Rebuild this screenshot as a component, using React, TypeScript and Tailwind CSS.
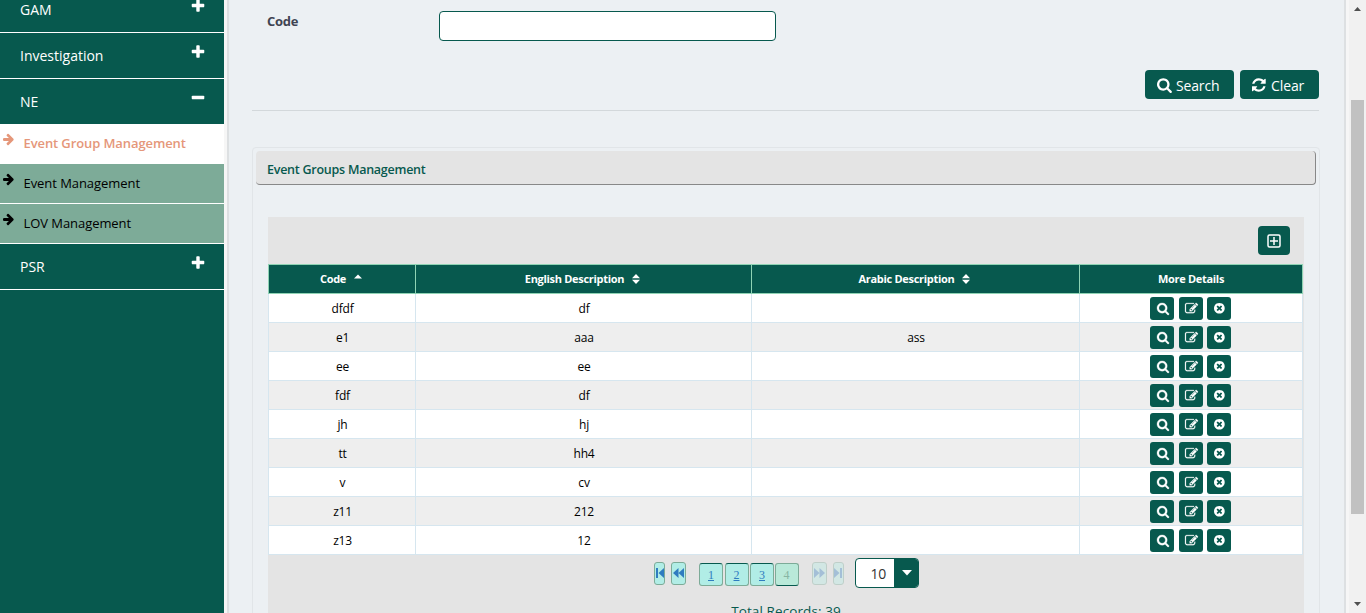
import React from "react";
import clsx from "clsx";

const PATHS = {
  plus: "M1408 736v192q0 40-28 68t-68 28H896v416q0 40-28 68t-68 28H608q-40 0-68-28t-28-68v-416H96q-40 0-68-28T0 928V736q0-40 28-68t68-28h416V224q0-40 28-68t68-28h192q40 0 68 28t28 68v416h416q40 0 68 28t28 68z",
  minus: "M1408 736v192q0 40-28 68t-68 28H96q-40 0-68-28T0 928V736q0-40 28-68t68-28h1216q40 0 68 28t28 68z",
  arrow: "M1472 896q0 54-37 91l-651 651q-39 37-91 37-51 0-90-37l-75-75q-38-38-38-91t38-91l293-293H117q-52 0-84.5-37.5T0 960V832q0-53 32.5-90.5T117 704h704L528 410q-38-36-38-90t38-90l75-75q38-38 90-38 53 0 91 38l651 651q37 35 37 90z",
  search: "M1152 832q0-185-131.5-316.5T704 384 387.500 515.500 256 832t131.500 316.500T704 1280t316.500-131.500T1152 832zm512 832q0 52-38 90t-90 38q-54 0-90-38l-343-342q-179 124-399 124-143 0-273.500-55.500t-225-150-150-225T0 832t55.500-273.500 150-225 225-150T704 128t273.500 55.500 225 150 150 225T1408 832q0 220-124 399l343 343q37 37 37 90z",
  refresh: "M1511 1056q0 5-1 7-64 268-268 434.500T764 1664q-146 0-282.500-55T238 1452l-129 129q-19 19-45 19t-45-19-19-45v-448q0-26 19-45t45-19h448q26 0 45 19t19 45-19 45l-137 137q71 66 161 102t187 36q134 0 250-65t186-179q11-17 53-117 8-23 30-23h192q13 0 22.500 9.500t9.500 22.500zm25-800v448q0 26-19 45t-45 19h-448q-26 0-45-19t-19-45 19-45l138-138Q969 384 768 384q-134 0-250 65T332 628q-11 17-53 117-8 23-30 23H50q-13 0-22.500-9.500T18 736v-7q65-268 270-434.500T768 128q146 0 284 55.500T1297 340l130-129q19-19 45-19t45 19 19 45z",
  edit: "M888 1184l116-116-152-152-116 116v56h96v96h56zm440-720q-16-16-33 1L945 815q-17 17-1 33t33-1l350-350q17-17 1-33zm80 594v190q0 119-84.500 203.500T1120 1536H288q-119 0-203.500-84.500T0 1248V416q0-119 84.500-203.500T288 128h832q63 0 117 25 15 7 18 23 3 17-9 29l-49 49q-14 14-32 8-23-6-45-6H288q-66 0-113 47t-47 113v832q0 66 47 113t113 47h832q66 0 113-47t47-113v-126q0-13 9-22l64-64q15-15 35-7t20 29zm-96-738l288 288-672 672H640V992zm444 132l-92 92-288-288 92-92q28-28 68-28t68 28l152 152q28 28 28 68t-28 68z",
  close: "M1149 1122q0-26-19-45L949 896l181-181q19-19 19-45 0-27-19-46l-90-90q-19-19-46-19-26 0-45 19L768 715 587 534q-19-19-45-19-27 0-46 19l-90 90q-19 19-19 46 0 26 19 45l181 181-181 181q-19 19-19 45 0 27 19 46l90 90q19 19 46 19 26 0 45-19l181-181 181 181q19 19 45 19 27 0 46-19l90-90q19-19 19-46zm387-226q0 209-103 385.500T1153.500 1561 768 1664t-385.500-103T103 1281.500 0 896t103-385.500T382.500 231 768 128t385.500 103T1433 510.500 1536 896z",
};

function Icon({ name, className, box = "0 0 1792 1792" }: { name: keyof typeof PATHS; className?: string; box?: string }) {
  return (
    <svg viewBox={box} fill="currentColor" className={clsx("shrink-0 overflow-visible", className)}>
      <path d={PATHS[name]} />
    </svg>
  );
}

function MenuItem({ label, open = false }: { label: string; open?: boolean }) {
  return (
    <div className="flex h-[46px] shrink-0 items-start border-b border-white bg-[#07594e] pl-5 pr-[19px] text-sm text-white">
      <span className="flex-1 pt-[13px] leading-5">{label}</span>
      <Icon name={open ? "minus" : "plus"} className="mt-[11px] h-4 w-[14px]" box="-64 0 1536 1792" />
    </div>
  );
}

function SubItem({ label, active = false }: { label: string; active?: boolean }) {
  return (
    <div
      className={clsx(
        "flex h-10 shrink-0 items-start border-b border-white pl-[3px] text-[13px]",
        active ? "bg-white font-semibold tracking-[-0.1px] text-[#e5977a]" : "bg-[#7dab98] tracking-[-0.06px] text-black"
      )}
    >
      <Icon name="arrow" className="mt-[9px] h-[13px] w-[13px]" />
      <span className="pl-[7.500px] pt-[9px] leading-5">{label}</span>
    </div>
  );
}

function SortIcon({ both = false }: { both?: boolean }) {
  return (
    <svg viewBox="0 0 8 10" className="ml-2 h-[10px] w-2" fill="white">
      <path d={both ? "M4 0 8 4.200H0zM0 5.800h8L4 10z" : "M4 0.500 8 4.500H0z"} />
    </svg>
  );
}

const COLS = "grid grid-cols-[147px_336px_328px_223px]";

const ROWS = [
  ["dfdf", "df", ""],
  ["e1", "aaa", "ass"],
  ["ee", "ee", ""],
  ["fdf", "df", ""],
  ["jh", "hj", ""],
  ["tt", "hh4", ""],
  ["v", "cv", ""],
  ["z11", "212", ""],
  ["z13", "12", ""],
];

function ActionButton({ name }: { name: keyof typeof PATHS }) {
  return (
    <button className="flex h-[23px] w-6 items-start justify-start rounded-[3px] bg-[#07594e] pl-[7px] pt-[5px] text-white">
      <Icon
        name={name}
        className={clsx(
          name === "edit" && "-ml-px h-[13px] w-[13px] stroke-white stroke-[30]",
          name === "search" && "h-[13px] w-[13px] stroke-white stroke-[40]",
          name === "close" && "ml-[0.5px] h-[12.5px] w-[12.5px]"
        )}
      />
    </button>
  );
}

function NavButton({ kind, wide, disabled = false }: { kind: string; wide: boolean; disabled?: boolean }) {
  return (
    <button
      className={clsx(
        "flex h-[23px] items-center justify-center rounded-[3px] border border-[#7dab98] bg-[#b1ede6] pb-[2px] text-[#2f7cc0]",
        wide ? "w-[15px]" : "w-[11px]",
        disabled && "opacity-35"
      )}
    >
      <svg viewBox={wide ? "0 0 11 10" : "0 0 8 10"} className={wide ? "h-[10px] w-[11px]" : "h-[10px] w-2"} fill="currentColor">
        <path d={kind} />
      </svg>
    </button>
  );
}

function Pager() {
  return (
    <div className="flex h-[33px] items-start pl-[386px] pt-[3px]">
      <div className="flex gap-[6px] pt-1">
        <NavButton kind="M0 0h2v10H0zM8 0v10L2.500 5z" wide={false} />
        <NavButton kind="M5.500 0v10L0 5zM11 0v10L5.500 5z" wide />
      </div>
      <div className="ml-[13px] flex gap-[1.500px] pt-[5px] text-xs">
        {["1", "2", "3"].map((n) => (
          <a
            key={n}
            className="flex h-[23px] w-6 items-center justify-center rounded-[3px] border border-[#7dab98] border-t-[#07594e] bg-[#b1ede6] font-['Liberation_Serif',serif] text-[#2f7cc0] underline"
          >
            {n}
          </a>
        ))}
        <span className="-ml-px flex h-[23px] w-6 items-center justify-center rounded-[3px] border border-[#7dab98] border-b-[#07594e] bg-[#b9e9d9] font-['Liberation_Serif',serif] text-[#87b5a3]">
          4
        </span>
      </div>
      <div className="ml-[13px] flex gap-[6px] pt-1">
        <NavButton kind="M0 0v10L5.500 5zM5.500 0v10L11 5z" wide disabled />
        <NavButton kind="M0 0v10L5.500 5zM6 0h2v10H6z" wide={false} disabled />
      </div>
      <div className="ml-[11px] flex h-[30px] w-16 overflow-hidden rounded-[4px] border border-[#07594e] bg-white">
        <span className="flex-1 pl-[15px] pt-[5px] text-sm leading-5 tracking-[-0.3px] text-[#333]">10</span>
        <span className="flex w-6 items-start justify-center bg-[#07594e] pl-[2px] pt-[11px]">
          <svg viewBox="0 0 10 6" className="h-[6px] w-[10px]" fill="white">
            <path d="M0 0h10L5 5.500z" />
          </svg>
        </span>
      </div>
    </div>
  );
}

export default function App() {
  return (
    <div className="flex h-[613px] w-[1366px] overflow-hidden bg-[#f6f6f6] font-['Open_Sans',sans-serif]">
      <aside className="flex w-56 shrink-0 flex-col overflow-hidden bg-[#07594e]">
        <div className="-mt-[13px] flex flex-col">
          <MenuItem label="GAM" />
          <MenuItem label="Investigation" />
          <MenuItem label="NE" open />
          <div className="-mt-px flex flex-col">
            <SubItem label="Event Group Management" active />
            <SubItem label="Event Management" />
            <SubItem label="LOV Management" />
          </div>
          <MenuItem label="PSR" />
        </div>
      </aside>

      <main className="ml-[3px] flex w-[1119px] shrink-0 flex-col border-x-2 border-[#dde0e2] bg-[#ecf0f3] pl-[23px] pr-[24px]">
        <div className="flex h-[70px] shrink-0 pl-[15px] pt-[11px]">
          <label className="w-[172px] text-[13px] font-bold leading-5 tracking-[-0.3px] text-[#3f4452]">Code</label>
          <div className="h-[30px] w-[337px] rounded-[4px] border border-[#07594e] bg-white" />
        </div>
        <div className="mr-px flex h-[41px] shrink-0 items-start justify-end gap-[6px] border-b border-[#d3d8db] text-sm text-white">
          <button className="flex h-[29px] w-[89px] items-center rounded-[4px] bg-[#07594e] pl-3 pt-[2px]">
            <Icon name="search" className="-mt-px h-4 w-4" />
            <span className="pl-[3px] tracking-[-0.15px]">Search</span>
          </button>
          <button className="flex h-[29px] w-[79px] items-center rounded-[4px] bg-[#07594e] pl-3 pt-[2px]">
            <Icon name="refresh" className="-mt-px h-4 w-4" />
            <span className="pl-[3px] tracking-[-0.1px]">Clear</span>
          </button>
        </div>

        <section className="mt-[36px] flex h-[520px] shrink-0 flex-col rounded-[4px] border border-[#e1e5e8] px-[3px] pt-[3px]">
          <header className="h-[34px] shrink-0 rounded-[4px] border-b border-r border-[#888] bg-[#e4e4e4] pl-[11px] pt-[9px] text-[12.5px] font-semibold leading-5 tracking-[-0.25px] text-[#07594e]">
            Event Groups Management
          </header>

          <div className="ml-3 mt-[32px] flex w-[1036px] flex-col bg-[#e4e4e4]">
            <div className="flex h-[47px] justify-end pr-[14px] pt-[9px]">
              <button className="flex h-[29px] w-8 items-center justify-center rounded-[4px] bg-[#07594e]">
                <svg viewBox="0 0 14 14" className="h-[14px] w-[14px]" fill="none" stroke="white" strokeWidth="1.5">
                  <rect x="1" y="1" width="12" height="12" rx="1.500" />
                  <path d="M7 3v8M3 7h8" />
                </svg>
              </button>
            </div>

            <div className="w-[1035px] border-r border-[#d6e6ef]">
              <div className={clsx(COLS, "-mr-px h-[30px] w-[1035px] border-y border-r border-[#8fd3b4] bg-[#07594e] text-[11px] font-bold tracking-[-0.3px] text-white")}>
                {["Code", "English Description", "Arabic Description", "More Details"].map((h, i) => (
                  <div key={h} className={clsx("flex items-center justify-center border-l border-[#8fd3b4]", i < 3 && "pr-[2px]")}>
                    {h}
                    {i < 3 && <SortIcon both={i > 0} />}
                  </div>
                ))}
              </div>
              {ROWS.map((r, i) => (
                <div key={r[0]} className={clsx(COLS, "h-[29px] text-xs tracking-[-0.2px] text-black", i % 2 ? "bg-[#eee]" : "bg-white")}>
                  {r.map((c, j) => (
                    <div key={j} className="flex items-center justify-center border-b border-l border-[#d6e6ef] pl-px pt-px">
                      {c}
                    </div>
                  ))}
                  <div className="flex items-center justify-center gap-[5px] border-b border-l border-[#d6e6ef] pr-[2px]">
                    <ActionButton name="search" />
                    <ActionButton name="edit" />
                    <div className="-ml-px flex">
                      <ActionButton name="close" />
                    </div>
                  </div>
                </div>
              ))}
            </div>

            <Pager />
            <div className="h-20 pt-[13px] text-center text-[13.5px] font-medium leading-5 tracking-[0.1px] text-[#07594e]">Total Records: 39</div>
          </div>
        </section>
      </main>

      <div className="ml-[3px] flex flex-1 flex-col items-center bg-[#f1f1f1] pr-px">
        <svg viewBox="0 0 7 4" className="mt-[7px] h-1 w-[7px] shrink-0" fill="#505050">
          <path d="M3.500 0 7 4H0z" />
        </svg>
        <div className="mt-[89px] h-[414px] w-[13px] shrink-0 bg-[#c1c1c1]" />
        <svg viewBox="0 0 7 4" className="mt-[88px] h-1 w-[7px] shrink-0" fill="#505050">
          <path d="M0 0h7L3.500 4z" />
        </svg>
      </div>
    </div>
  );
}
